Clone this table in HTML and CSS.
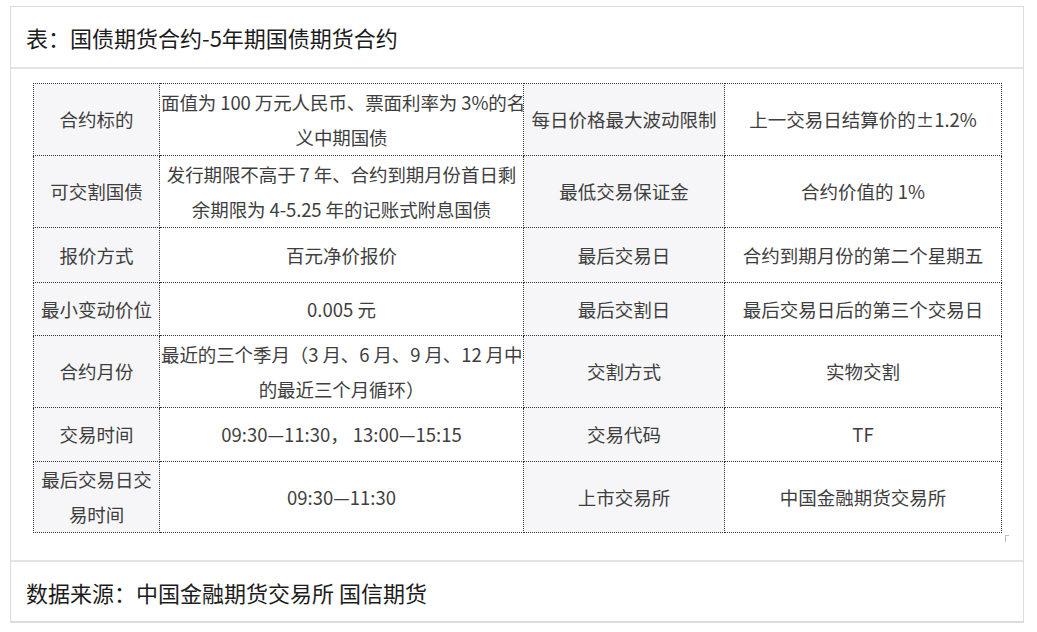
FILE: index.html
```html
<!DOCTYPE html>
<html lang="zh-CN">
<head>
<meta charset="utf-8">
<title>国债期货合约</title>
<link rel="stylesheet" href="styles.css">
</head>
<body>
<div class="card">
  <div class="card-head">表：国债期货合约-5年期国债期货合约</div>
  <div class="card-body">
    <table class="spec">
      <colgroup>
        <col class="c1"><col class="c2"><col class="c3"><col class="c4">
      </colgroup>
      <tr class="r72">
        <td class="lab">合约标的</td>
        <td class="val nw">面值为 100 万元人民币、票面利率为 3%的名<br>义中期国债</td>
        <td class="lab">每日价格最大波动限制</td>
        <td class="val">上一交易日结算价的±1.2%</td>
      </tr>
      <tr class="r72">
        <td class="lab">可交割国债</td>
        <td class="val nw">发行期限不高于 7 年、合约到期月份首日剩<br>余期限为 4-5.25 年的记账式附息国债</td>
        <td class="lab">最低交易保证金</td>
        <td class="val">合约价值的 1%</td>
      </tr>
      <tr class="r55">
        <td class="lab">报价方式</td>
        <td class="val">百元净价报价</td>
        <td class="lab">最后交易日</td>
        <td class="val">合约到期月份的第二个星期五</td>
      </tr>
      <tr class="r53">
        <td class="lab">最小变动价位</td>
        <td class="val">0.005 元</td>
        <td class="lab">最后交割日</td>
        <td class="val">最后交易日后的第三个交易日</td>
      </tr>
      <tr class="r72">
        <td class="lab">合约月份</td>
        <td class="val nw">最近的三个季月（3 月、6 月、9 月、12 月中<br>的最近三个月循环）</td>
        <td class="lab">交割方式</td>
        <td class="val">实物交割</td>
      </tr>
      <tr class="r54">
        <td class="lab">交易时间</td>
        <td class="val">09:30—11:30，&nbsp;13:00—15:15</td>
        <td class="lab">交易代码</td>
        <td class="val">TF</td>
      </tr>
      <tr class="r71">
        <td class="lab nw">最后交易日交<br>易时间</td>
        <td class="val">09:30—11:30</td>
        <td class="lab">上市交易所</td>
        <td class="val">中国金融期货交易所</td>
      </tr>
    </table>
    <span class="corner"></span>
  </div>
  <div class="card-foot">数据来源：中国金融期货交易所 国信期货</div>
</div>
</body>
</html>
```

FILE: styles.css
```css
html, body {
  margin: 0;
  padding: 0;
  background: #ffffff;
}

body {
  font-family: "Noto Sans CJK SC", "Noto Sans", "Liberation Sans", sans-serif;
}

.card {
  margin: 6px 0 0 10px;
  width: 1014px;
  border: 1px solid #dcdcdc;
  box-sizing: border-box;
  border-bottom-width: 2px;
}

.card-head {
  height: 60px;
  display: flex;
  align-items: center;
  padding-left: 15px;
  font-size: 22px;
  color: #1c1c1c;
  border-bottom: 2px solid #e3e3e3;
}

.card-body {
  position: relative;
  padding: 14px 0 27px 22px;
  border-bottom: 2px solid #e3e3e3;
}

.spec {
  border-collapse: collapse;
  table-layout: fixed;
  width: 968px;
  border: 1px dotted #333;
  font-size: 18.5px;
  color: #3e3e3e;
}

.spec col.c1 { width: 126px; }
.spec col.c2 { width: 364px; }
.spec col.c3 { width: 201px; }
.spec col.c4 { width: 277px; }

.spec td {
  border: 1px dotted #333;
  padding: 0 1px;
  text-align: center;
  vertical-align: middle;
  line-height: 35px;
  overflow: visible;
}

.spec td.lab {
  background: #f6f6f8;
}

.spec td.val {
  background: #ffffff;
}

.spec td.nw {
  white-space: nowrap;
  letter-spacing: -0.1px;
}

.r72 { height: 72px; }
.r71 { height: 71px; }
.r55 { height: 55px; }
.r54 { height: 54px; }
.r53 { height: 53px; }

.corner {
  position: absolute;
  left: 994px;
  top: 466px;
  width: 3px;
  height: 6px;
  border-left: 1px solid #bdbdbd;
  border-top: 1px solid #bdbdbd;
}

.card-foot {
  height: 59px;
  display: flex;
  align-items: center;
  padding-left: 15px;
  font-size: 22px;
  color: #1c1c1c;
}
```
